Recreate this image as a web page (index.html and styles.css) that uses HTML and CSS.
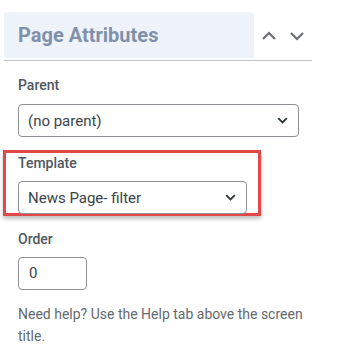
FILE: index.html
```html
<!DOCTYPE html>
<html>
<head>
<meta charset="utf-8">
<link rel="stylesheet" href="styles.css">
</head>
<body>
<div class="panel">
  <div class="head">
    <h2 class="title">Page Attributes</h2>
    <div class="arrows">
      <svg class="chev" width="16" height="10" viewBox="0 0 16 10"><path d="M2 8 L8 2 L14 8" fill="none" stroke="#6b6f75" stroke-width="2.2"/></svg>
      <svg class="chev" width="16" height="10" viewBox="0 0 16 10"><path d="M2 2 L8 8 L14 2" fill="none" stroke="#6b6f75" stroke-width="2.2"/></svg>
    </div>
  </div>
  <div class="body">
    <div class="field">
      <div class="label">Parent</div>
      <div class="select wide"><span>(no parent)</span><svg width="11" height="7" viewBox="0 0 11 7"><path d="M1.2 1.2 L5.5 5.5 L9.8 1.2" fill="none" stroke="#2c3338" stroke-width="1.8"/></svg></div>
    </div>
    <div class="highlight">
      <div class="label">Template</div>
      <div class="select mid"><span>News Page- filter</span><svg width="11" height="7" viewBox="0 0 11 7"><path d="M1.2 1.2 L5.5 5.5 L9.8 1.2" fill="none" stroke="#2c3338" stroke-width="1.8"/></svg></div>
    </div>
    <div class="field">
      <div class="label">Order</div>
      <div class="input">0</div>
    </div>
    <p class="help">Need help? Use the Help tab above the screen title.</p>
  </div>
</div>
</body>
</html>
```
FILE: styles.css
```css
body {
  margin: 0;
  background: #fff;
  font-family: Roboto, "Liberation Sans", sans-serif;
  color: #2c3338;
}
.panel {
  width: 308px;
  margin-left: 4px;
}
.head {
  display: flex;
  align-items: center;
  padding-top: 12px;
  padding-bottom: 2px;
  border-bottom: 1px solid #c3c4c7;
}
.title {
  margin: 0;
  width: 250px;
  height: 46px;
  box-sizing: border-box;
  padding-left: 14px;
  line-height: 46px;
  background: #eef3fa;
  border-radius: 4px;
  font-size: 20px;
  font-weight: 700;
  color: #8090aa;
}
.arrows {
  display: flex;
  gap: 12px;
  margin-left: 7px;
  margin-top: 2px;
}
.chev { display: block; }
.body {
  padding: 15px 0 0 14px;
}
.label {
  font-size: 14px;
  line-height: 18px;
  font-weight: 500;
  color: #50575e;
}
.select {
  display: flex;
  align-items: center;
  justify-content: space-between;
  box-sizing: border-box;
  height: 33px;
  margin-top: 10px;
  padding: 0 10px 0 9px;
  border: 1px solid #8c8f94;
  border-radius: 4px;
  font-size: 15px;
  color: #3c434a;
}
.select svg { display: block; }
.wide { width: 281px; }
.mid { width: 229px; }
.highlight {
  margin: 13px 0 0 -15px;
  width: 258px;
  box-sizing: border-box;
  border: 3px solid #e24848;
  padding: 0 0 0 12px;
  box-shadow: 0 3px 4px rgba(0,0,0,0.25);
}
.highlight .label { padding-top: 1px; }
.highlight .select { margin-top: 9px; margin-bottom: -1px; }
.highlight + .field { margin-top: 14px; }
.input {
  box-sizing: border-box;
  width: 69px;
  height: 33px;
  margin-top: 9px;
  padding-left: 10px;
  line-height: 31px;
  border: 1px solid #8c8f94;
  border-radius: 4px;
  font-size: 15px;
  color: #3c434a;
}
.help {
  margin: 13px 0 0;
  width: 290px;
  font-size: 14px;
  line-height: 22px;
  color: #646970;
}
```
